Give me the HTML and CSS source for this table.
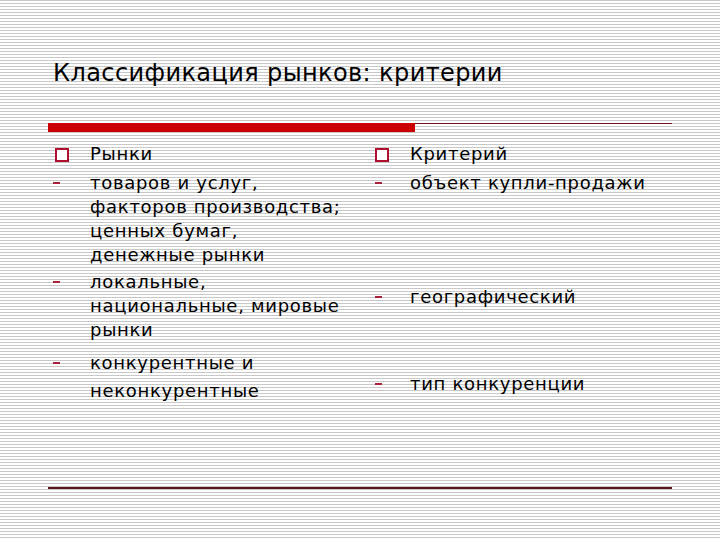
FILE: index.html
```html
<!DOCTYPE html>
<html lang="ru">
<head>
<meta charset="utf-8">
<title>Классификация рынков: критерии</title>
<link rel="stylesheet" href="styles.css">
</head>
<body>
<div class="slide">
  <h1 class="title">Классификация рынков: критерии</h1>
  <div class="rule"><div class="rule-bar"></div><div class="rule-line"></div></div>
  <div class="columns">
    <div class="col">
      <div class="item head"><span class="mk"><span class="sq"></span></span><span class="tx">Рынки</span></div>
      <div class="item i1"><span class="mk"><span class="dash"></span></span><span class="tx">товаров и услуг,<br>факторов производства;<br>ценных бумаг,<br>денежные рынки</span></div>
      <div class="item i2"><span class="mk"><span class="dash"></span></span><span class="tx">локальные,<br>национальные, мировые<br>рынки</span></div>
      <div class="item i3"><span class="mk"><span class="dash"></span></span><span class="tx">конкурентные и<br>неконкурентные</span></div>
    </div>
    <div class="col right">
      <div class="item head"><span class="mk"><span class="sq"></span></span><span class="tx">Критерий</span></div>
      <div class="item i1"><span class="mk"><span class="dash"></span></span><span class="tx">объект купли-продажи</span></div>
      <div class="item r2"><span class="mk"><span class="dash"></span></span><span class="tx">географический</span></div>
      <div class="item r3"><span class="mk"><span class="dash"></span></span><span class="tx">тип конкуренции</span></div>
    </div>
  </div>
  <div class="bottom-rule"></div>
</div>
</body>
</html>
```
FILE: styles.css
```css
html, body {
  margin: 0;
  padding: 0;
}
body {
  width: 720px;
  height: 540px;
  overflow: hidden;
  background: repeating-linear-gradient(to bottom, #c8c8c8 0px, #c8c8c8 1px, #ffffff 1px, #ffffff 3px);
  font-family: "DejaVu Sans", Verdana, sans-serif;
  color: #000;
}
.slide {
  padding: 58px 48px 0 48px;
  display: flex;
  flex-direction: column;
}
.title {
  margin: 0 0 0 5px;
  font-size: 24px;
  line-height: 30px;
  font-weight: normal;
  letter-spacing: 0.4px;
}
.rule {
  margin-top: 35px;
  display: flex;
  align-items: flex-start;
  width: 624px;
}
.rule-bar {
  width: 367px;
  height: 9px;
  background: #cc0000;
}
.rule-line {
  flex: 1;
  height: 1px;
  background: #6b1414;
}
.columns {
  margin-top: 10px;
  margin-left: 7px;
  display: grid;
  grid-template-columns: 320px 320px;
  font-size: 18px;
  line-height: 24px;
  letter-spacing: 0.7px;
}
.col {
  display: flex;
  flex-direction: column;
}
.item {
  display: flex;
}
.mk {
  width: 35px;
  flex: none;
}
.sq {
  display: block;
  width: 10px;
  height: 10px;
  border: 2px solid #b0102e;
  background: #fff;
  margin-top: 6px;
}
.dash {
  display: block;
  width: 7px;
  height: 2px;
  background: #a8203a;
  margin-top: 11px;
  margin-left: -2px;
}
.right .dash {
  margin-left: 0;
}
.i1 { margin-top: 5px; }
.i2 { margin-top: 3px; }
.i3 { margin-top: 7px; line-height: 28px; }
.i3 .dash { margin-top: 13px; }
.r2 { margin-top: 90px; }
.r3 { margin-top: 63px; }
.bottom-rule {
  margin-top: 82px;
  width: 624px;
  height: 2px;
  background: #5a1414;
}
```
